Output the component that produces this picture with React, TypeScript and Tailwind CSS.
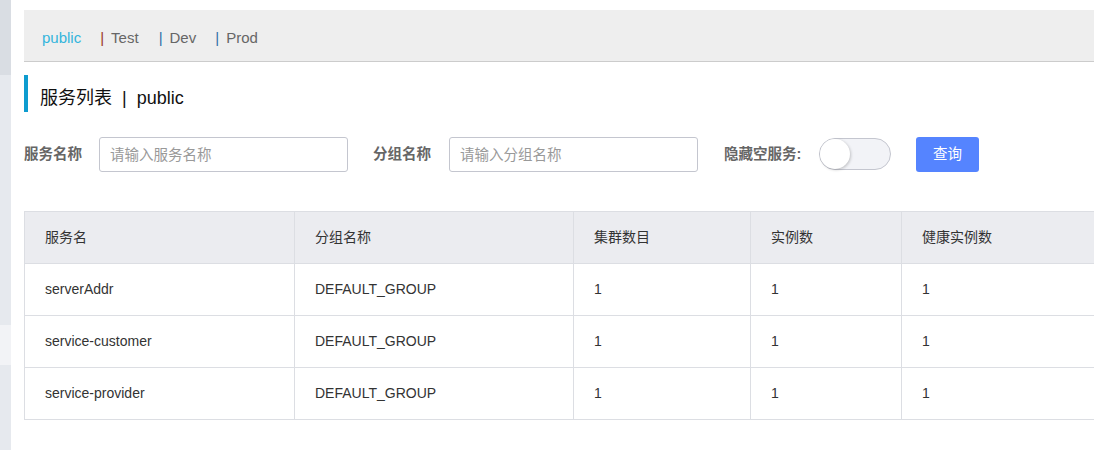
import React, { useState } from 'react';

type Service = {
  name: string;
  group: string;
  clusters: number;
  instances: number;
  healthy: number;
};

const SERVICES: Service[] = [
  { name: 'serverAddr', group: 'DEFAULT_GROUP', clusters: 1, instances: 1, healthy: 1 },
  { name: 'service-customer', group: 'DEFAULT_GROUP', clusters: 1, instances: 1, healthy: 1 },
  { name: 'service-provider', group: 'DEFAULT_GROUP', clusters: 1, instances: 1, healthy: 1 },
];

const FONT = "font-['Liberation_Sans','Noto_Sans_CJK_SC',sans-serif]";

// namespace tabs along the top
const NamespaceBar: React.FC = () => (
  <div className="h-[52px] flex items-center pl-[18px] pt-[6px] bg-[#eeeeee] border-b border-[#cccccc] text-[15px]">
    <span className="text-[#33b5dc]">public</span>
    <span className="ml-[19px] text-[#9c3a28]">|</span>
    <span className="ml-[7px] text-[#666666]">Test</span>
    <span className="ml-[20px] text-[#2f6fa8]">|</span>
    <span className="ml-[7px] text-[#666666]">Dev</span>
    <span className="ml-[19px] text-[#2f6fa8]">|</span>
    <span className="ml-[7px] text-[#666666]">Prod</span>
  </div>
);

const Switch: React.FC<{ on: boolean; onChange: (v: boolean) => void }> = ({ on, onChange }) => (
  <button
    onClick={() => onChange(!on)}
    className={`relative w-[72px] h-[32px] -mt-[2px] rounded-full border border-[#c4c6cf] ${on ? 'bg-[#5584ff]' : 'bg-[#f2f3f7]'}`}
  >
    <span
      className={`absolute top-0 w-[30px] h-[30px] rounded-full bg-white shadow-[1px_1px_3px_rgba(0,0,0,0.2)] ${on ? 'right-0' : 'left-0'}`}
    />
  </button>
);

const App: React.FC = () => {
  const [hideEmpty, setHideEmpty] = useState(false);

  return (
    <div className={`min-h-screen w-full flex bg-white ${FONT}`}>
      {/* sidebar edge */}
      <div className="w-[11px] flex flex-col shrink-0">
        <div className="h-[75px] bg-[#d9dde3]" />
        <div className="h-[250px] bg-[#e6e9ee]" />
        <div className="h-[40px] bg-[#f2f3f6]" />
        <div className="flex-1 bg-[#e6e9ee]" />
      </div>

      <div className="flex-1 ml-[13px] pt-[10px] min-w-0">
        <NamespaceBar />

        {/* title */}
        <div className="mt-[13px] h-[37px] flex items-end border-l-[4px] border-[#0e9ccf] pl-[12px] text-[18px] text-[#111111]">
          <span>服务列表</span>
          <span className="mx-[10px]">|</span>
          <span>public</span>
        </div>

        {/* filters */}
        <div className="mt-[25px] flex items-center text-[14.5px]">
          <span className="font-bold text-[#666666] w-[75px]">服务名称</span>
          <input
            placeholder="请输入服务名称"
            className="w-[249px] h-[35px] px-[10px] border border-[#c4c6cf] rounded-[3px] placeholder:text-[#999999] outline-none"
          />
          <span className="ml-[25px] font-bold text-[#666666] w-[76px]">分组名称</span>
          <input
            placeholder="请输入分组名称"
            className="w-[249px] h-[35px] px-[10px] border border-[#c4c6cf] rounded-[3px] placeholder:text-[#999999] outline-none"
          />
          <span className="ml-[26px] font-bold text-[#666666] w-[95px]">隐藏空服务:</span>
          <Switch on={hideEmpty} onChange={setHideEmpty} />
          <button className="ml-[25px] w-[63px] h-[35px] rounded-[3px] bg-[#5584ff] text-white">查询</button>
        </div>

        {/* table */}
        <table className="mt-[39px] w-full border-collapse text-[14px] text-[#333333] table-fixed">
          <thead>
            <tr className="bg-[#ebecf0] h-[52px]">
              <th className="w-[270px] border border-[#dcdee3] pl-[20px] text-left font-normal">服务名</th>
              <th className="w-[279px] border border-[#dcdee3] pl-[20px] text-left font-normal">分组名称</th>
              <th className="w-[177px] border border-[#dcdee3] pl-[20px] text-left font-normal">集群数目</th>
              <th className="w-[151px] border border-[#dcdee3] pl-[20px] text-left font-normal">实例数</th>
              <th className="border border-[#dcdee3] border-r-0 pl-[20px] text-left font-normal">健康实例数</th>
            </tr>
          </thead>
          <tbody>
            {SERVICES.map(s => (
              <tr key={s.name} className="h-[52px]">
                <td className="border border-[#dcdee3] pl-[20px]">{s.name}</td>
                <td className="border border-[#dcdee3] pl-[20px]">{s.group}</td>
                <td className="border border-[#dcdee3] pl-[20px]">{s.clusters}</td>
                <td className="border border-[#dcdee3] pl-[20px]">{s.instances}</td>
                <td className="border border-[#dcdee3] border-r-0 pl-[20px]">{s.healthy}</td>
              </tr>
            ))}
          </tbody>
        </table>
      </div>
    </div>
  );
};

export default App;
